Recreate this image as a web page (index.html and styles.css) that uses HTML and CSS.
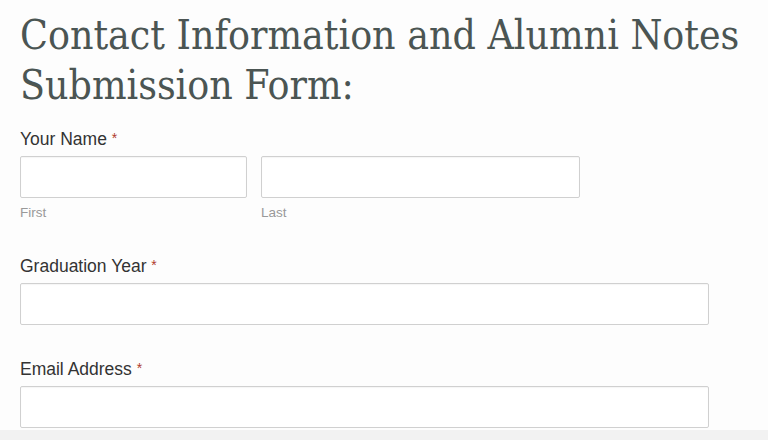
FILE: index.html
```html
<!DOCTYPE html>
<html lang="en">
<head>
  <meta charset="UTF-8" />
  <meta name="viewport" content="width=device-width, initial-scale=1.0"/>
  <title>Contact Information and Alumni Notes</title>
  <link rel="stylesheet" href="styles.css">
</head>
<body>

  <div class="page">
    <h1>Contact Information and Alumni Notes Submission Form:</h1>

    <form class="alumni-form">
      <div class="field">
        <label class="field-label">Your Name <span class="req">*</span></label>
        <div class="name-row">
          <div class="name-part first">
            <input type="text" id="first-name">
            <span class="sublabel">First</span>
          </div>
          <div class="name-part last">
            <input type="text" id="last-name">
            <span class="sublabel">Last</span>
          </div>
        </div>
      </div>

      <div class="field">
        <label class="field-label" for="grad-year">Graduation Year <span class="req">*</span></label>
        <input type="text" id="grad-year" class="wide">
      </div>

      <div class="field">
        <label class="field-label" for="email">Email Address <span class="req">*</span></label>
        <input type="email" id="email" class="wide">
      </div>
    </form>
  </div>

  <div class="bottom-strip"></div>

</body>
</html>
```

FILE: styles.css
```css
body {
  margin: 0;
  padding: 0;
  background: #fdfdfd;
  color: #333;
  font-family: 'Liberation Sans', Arial, sans-serif;
}
.page {
  padding: 0 20px;
}
h1 {
  margin: 0;
  padding-top: 10px;
  width: 740px;
  font-family: 'DejaVu Serif Condensed', 'DejaVu Serif', serif;
  font-stretch: condensed;
  font-weight: normal;
  font-size: 40.6px;
  line-height: 50px;
  color: #4b5553;
}
.alumni-form {
  margin-top: 18px;
}
.field {
  margin-bottom: 33px;
}
.field:last-child {
  margin-bottom: 0;
}
.field-label {
  display: block;
  height: 21px;
  font-size: 17.5px;
  line-height: 22px;
  margin-bottom: 7px;
  color: #333;
}
.req {
  font-size: 14px;
  line-height: 1;
  vertical-align: 2px;
  color: #b03a2e;
}
.name-row {
  display: flex;
  gap: 14px;
}
.name-part {
  display: flex;
  flex-direction: column;
}
.name-part.first {
  width: 227px;
}
.name-part.last {
  width: 319px;
}
input[type="text"], input[type="email"] {
  box-sizing: border-box;
  width: 100%;
  height: 42px;
  padding: 8px 10px;
  border: 1px solid #d0d0d0;
  border-radius: 2px;
  background: #fff;
  box-shadow: inset 0 1px 1px rgba(0, 0, 0, 0.04);
  font-size: 16px;
  outline: none;
}
input.wide {
  width: 689px;
}
.sublabel {
  margin-top: 6px;
  font-size: 13.5px;
  line-height: 18px;
  color: #999;
}
.bottom-strip {
  position: fixed;
  left: 0;
  right: 0;
  bottom: 0;
  height: 10px;
  background: #f2f2f2;
}
```
